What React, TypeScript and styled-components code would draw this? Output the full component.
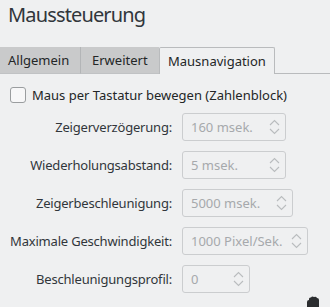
import styled, {createGlobalStyle} from 'styled-components'

const GlobalStyle = createGlobalStyle`
  html, body {
    margin: 0;
    padding: 0;
    background: #eff0f1;
  }
  body {
    font-family: "Noto Sans", "DejaVu Sans", sans-serif;
    color: #232627;
  }
`

interface SpinField {
  label: string
  value: string
  width: number
}

const fields: SpinField[] = [
  {label: 'Zeigerverzögerung:', value: '160 msek.', width: 104},
  {label: 'Wiederholungsabstand:', value: '5 msek.', width: 104},
  {label: 'Zeigerbeschleunigung:', value: '5000 msek.', width: 111},
  {label: 'Maximale Geschwindigkeit:', value: '1000 Pixel/Sek.', width: 126},
  {label: 'Beschleunigungsprofil:', value: '0', width: 68},
]

const Chevrons = () => (
  <svg width="11" height="16" viewBox="0 0 11 16" fill="none" stroke="#b9bcbe" strokeWidth="1.1">
    <polyline points="1,6 5.5,1.5 10,6" />
    <polyline points="1,10 5.5,14.5 10,10" />
  </svg>
)

const Cursor = () => (
  <svg width="18" height="14" viewBox="0 0 18 14">
    <path
      d="M3 14 L3 6 Q3 4 5 4 L5 3 Q5 1 7 1.5 Q8 0 10 1 Q12 0 13 2 Q15 2 15 4 L15 14 Z"
      fill="#2b2d2f"
    />
  </svg>
)

export default function App() {
  return (
    <Page>
      <GlobalStyle />
      <Title>Maussteuerung</Title>
      <TabBar>
        <Tab>Allgemein</Tab>
        <Tab $divider>Erweitert</Tab>
        <Tab $active>Mausnavigation</Tab>
        <TabFill />
      </TabBar>
      <Content>
        <CheckRow>
          <CheckBox />
          <span>Maus per Tastatur bewegen (Zahlenblock)</span>
        </CheckRow>
        <Form>
          {fields.map((f) => (
            <FormRow key={f.label}>
              <Label>{f.label}</Label>
              <SpinBox style={{width: f.width}}>
                <SpinValue>{f.value}</SpinValue>
                <Chevrons />
              </SpinBox>
            </FormRow>
          ))}
        </Form>
      </Content>
      <CursorSpot>
        <Cursor />
      </CursorSpot>
    </Page>
  )
}

const Page = styled.div`
  position: relative;
  width: 330px;
  height: 307px;
  overflow: hidden;
  background: #eff0f1;
`

const Title = styled.h1`
  margin: 0 0 0 8px;
  font-size: 20px;
  font-weight: 400;
  letter-spacing: -0.85px;
  line-height: 27px;
  padding-top: 1px;
  color: #31363b;
`

const TabBar = styled.div`
  display: flex;
  align-items: stretch;
  height: 27px;
  margin-top: 19px;
`

const Tab = styled.div<{$active?: boolean; $divider?: boolean}>`
  display: flex;
  align-items: center;
  box-sizing: border-box;
  font-size: 13px;
  color: #232627;
  ${(p) =>
    p.$active
      ? `
    background: #eff0f1;
    border: 1px solid #b9bbbd;
    border-bottom: none;
    border-radius: 2px 2px 0 0;
    padding: 0 8px;
  `
      : `
    width: 80px;
    padding-left: 8px;
    background: #c9cacb;
    border-bottom: 1px solid #c0c2c4;
  `}
  ${(p) => (p.$divider ? 'padding-left: 11px; width: 79px; border-left: 1px solid #b3b5b7;' : '')}
`

const TabFill = styled.div`
  flex: 1;
  border-bottom: 1px solid #b9bbbd;
`

const Content = styled.div`
  padding: 13px 0 0 10px;
`

const CheckRow = styled.label`
  display: flex;
  align-items: center;
  gap: 6px;
  font-size: 13px;
  height: 16px;
`

const CheckBox = styled.span`
  display: block;
  width: 14px;
  height: 14px;
  border: 1px solid #9a9d9f;
  border-radius: 3px;
  background: #f7f7f8;
`

const Form = styled.div`
  display: grid;
  grid-template-columns: 164px auto;
  column-gap: 10px;
  row-gap: 10px;
  margin-top: 10px;
  margin-left: -2px;
  justify-content: start;
  justify-items: start;
`

const FormRow = styled.div`
  display: contents;
`

const Label = styled.span`
  justify-self: end;
  align-self: center;
  font-size: 13px;
  letter-spacing: -0.2px;
  white-space: nowrap;
  color: #31363b;
`

const SpinBox = styled.div`
  display: flex;
  align-items: center;
  justify-content: space-between;
  box-sizing: border-box;
  height: 28px;
  padding: 0 5px 0 8px;
  border: 1px solid #cbcdcf;
  border-radius: 3px;
  background: #eff0f1;
`

const SpinValue = styled.span`
  font-size: 13px;
  color: #a6a9ac;
  white-space: nowrap;
`

const CursorSpot = styled.div`
  position: absolute;
  left: 304px;
  top: 293px;
`
